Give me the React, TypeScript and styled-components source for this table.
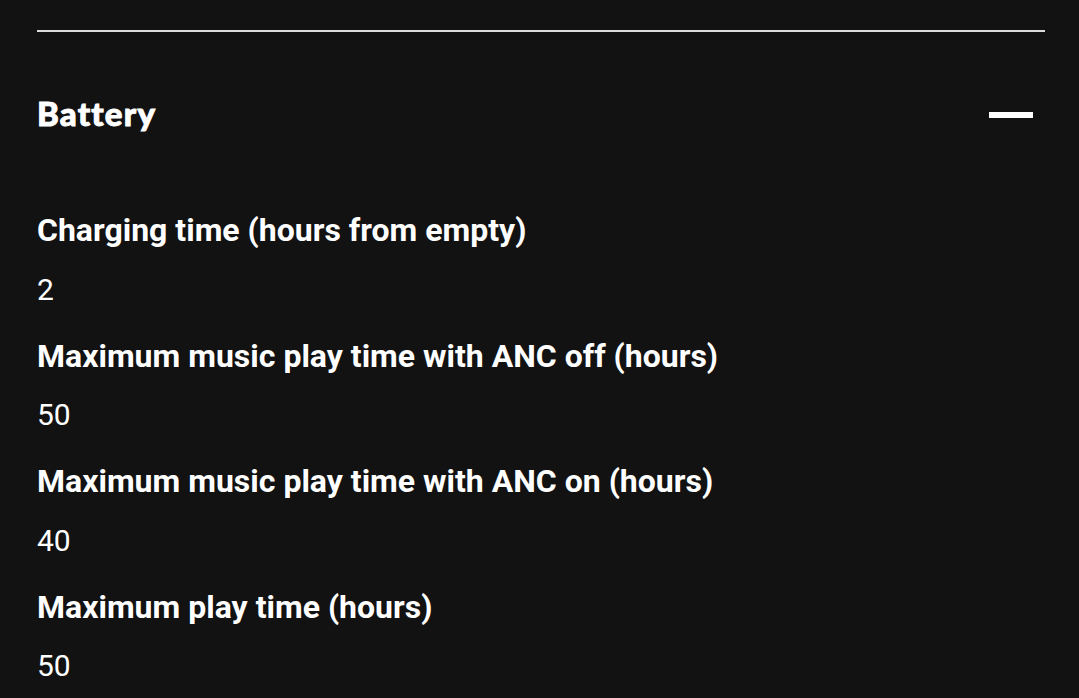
import type { ReactElement } from "react";
import styled, { createGlobalStyle } from "styled-components";

const specs = [
  { label: "Charging time (hours from empty)", value: "2" },
  { label: "Maximum music play time with ANC off (hours)", value: "50" },
  { label: "Maximum music play time with ANC on (hours)", value: "40" },
  { label: "Maximum play time (hours)", value: "50" },
];

export default function App(): ReactElement {
  return (
    <>
      <GlobalStyle />
      <StyledSpecs>
        <Divider />
        <SectionHeader>
          <SectionTitle>Battery</SectionTitle>
          <CollapseButton aria-label="Collapse battery section">
            <MinusBar />
          </CollapseButton>
        </SectionHeader>
        <SpecList>
          {specs.map((spec) => (
            <SpecItem key={spec.label}>
              <SpecLabel>{spec.label}</SpecLabel>
              <SpecValue>{spec.value}</SpecValue>
            </SpecItem>
          ))}
        </SpecList>
      </StyledSpecs>
    </>
  );
}

const GlobalStyle = createGlobalStyle`
  html, body {
    margin: 0;
    background: #121212;
    color: #ffffff;
    font-family: Roboto, "Liberation Sans", sans-serif;
  }
`;

const StyledSpecs = styled.div`
  display: flex;
  flex-direction: column;
  padding: 30px 34px 0 37px;
  height: 698px;
  box-sizing: border-box;
  overflow: hidden;
`;

const Divider = styled.hr`
  margin: 0;
  border: none;
  height: 2px;
  background: #dcdcdc;
`;

const SectionHeader = styled.div`
  display: flex;
  align-items: center;
  justify-content: space-between;
  margin-top: 61px;
  height: 40px;
`;

const SectionTitle = styled.h2`
  margin: 0;
  font-family: Lato, "DejaVu Sans", sans-serif;
  font-weight: 900;
  font-size: 33px;
  line-height: 40px;
  letter-spacing: 1.2px;
  -webkit-text-stroke: 0.9px #ffffff;
`;

const CollapseButton = styled.button`
  display: flex;
  align-items: center;
  justify-content: flex-start;
  width: 56px;
  height: 40px;
  padding: 3px 0 0;
  border: none;
  background: transparent;
  cursor: pointer;
`;

const MinusBar = styled.span`
  display: block;
  width: 44px;
  height: 6px;
  background: #ffffff;
`;

const SpecList = styled.dl`
  display: flex;
  flex-direction: column;
  gap: 31px;
  margin: 79px 0 0;
`;

const SpecItem = styled.div`
  display: flex;
  flex-direction: column;
  gap: 24.5px;
`;

const SpecLabel = styled.dt`
  font-weight: 700;
  font-size: 32px;
  line-height: 36px;
`;

const SpecValue = styled.dd`
  margin: 0;
  font-weight: 400;
  font-size: 30px;
  line-height: 34px;
`;
